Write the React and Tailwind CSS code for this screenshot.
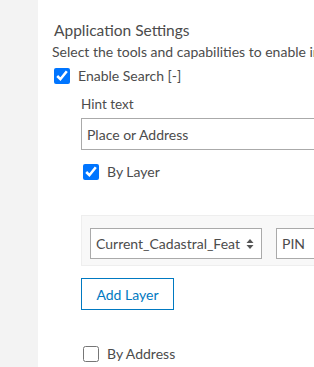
import { useState } from "react";

const Arrows = () => (
  <svg width="8" height="12" viewBox="0 0 8 12" className="shrink-0">
    <path d="M4 1 L7.5 5 H0.5 Z" fill="#555" />
    <path d="M4 11 L7.5 7 H0.5 Z" fill="#555" />
  </svg>
);

const App = () => {
  const [search, setSearch] = useState(true);
  const [byLayer, setByLayer] = useState(true);
  const [byAddress, setByAddress] = useState(false);

  return (
    <div className="flex h-[367px] w-[314px] overflow-hidden bg-white text-[#4c4c4c] font-['Lato',sans-serif]">
      <div className="w-[38px] shrink-0 bg-[#f3f3f3]" />
      <div className="flex-1 min-w-0 pl-[14px] pt-[20px]">
        <h2 className="pl-[2px] text-[15.5px] leading-[20px] whitespace-nowrap">Application Settings</h2>
        <p className="mt-[3px] text-[14px] leading-[18px] whitespace-nowrap">
          Select the tools and capabilities to enable in the app
        </p>
        <label className="mt-[4px] flex items-center gap-[8px] pl-[2px] text-[14px]">
          <input
            type="checkbox"
            checked={search}
            onChange={(e) => setSearch(e.target.checked)}
            className="m-0 h-[16px] w-[16px]"
          />
          <span className="whitespace-nowrap">Enable Search [-]</span>
        </label>

        <div className="pl-[29px]">
          <div className="mt-[9px] text-[13.5px] leading-[18px]">Hint text</div>
          <input
            type="text"
            defaultValue="Place or Address"
            className="mt-[5px] block h-[32px] w-[260px] border border-[#aaa] px-[5px] text-[14px] text-[#4c4c4c] outline-none"
          />
          <label className="mt-[11px] flex items-center gap-[8px] pl-[2px] text-[14px]">
            <input
              type="checkbox"
              checked={byLayer}
              onChange={(e) => setByLayer(e.target.checked)}
              className="m-0 h-[16px] w-[16px]"
            />
            <span>By Layer</span>
          </label>

          <div className="mt-[33px] flex w-[260px] gap-[14px] border border-[#eee] bg-[#f8f8f8] pl-[8px] pt-[12px] pb-[6px]">
            <div className="flex h-[31px] w-[172px] shrink-0 items-center justify-between border border-[#aaa] bg-white pl-[5px] pr-[7px] text-[14px]">
              <span className="whitespace-nowrap">Current_Cadastral_Feat</span>
              <Arrows />
            </div>
            <div className="flex h-[31px] flex-1 items-center border border-r-0 border-[#aaa] bg-white pl-[5px] text-[14px]">
              PIN
            </div>
          </div>

          <button className="mt-[12px] h-[32px] w-[93px] border border-[#0079c1] bg-white text-[14px] text-[#0079c1]">
            Add Layer
          </button>

          <label className="mt-[33px] flex items-center gap-[8px] pl-[2px] text-[14px]">
            <input
              type="checkbox"
              checked={byAddress}
              onChange={(e) => setByAddress(e.target.checked)}
              className="m-0 h-[16px] w-[16px]"
            />
            <span>By Address</span>
          </label>
        </div>
      </div>
    </div>
  );
};

export default App;
